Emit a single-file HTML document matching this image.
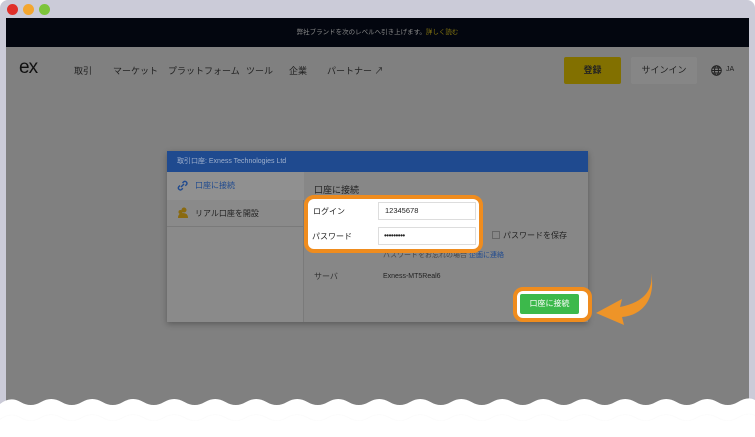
<!DOCTYPE html>
<html><head><meta charset="utf-8"><style>
*{margin:0;padding:0;box-sizing:border-box}
body{width:755px;height:437px;background:#fff;position:relative;overflow:hidden;font-family:"Liberation Sans","Noto Sans CJK JP",sans-serif}
.frame{position:absolute;left:0;top:0;width:755px;height:420px;background:#cbcbd8;border-radius:8px 8px 0 0}
.dot{position:absolute;top:4px;width:11px;height:11px;border-radius:50%}
.page{position:absolute;left:6px;top:18px;width:743px;height:400px;background:#808080}
.top{position:absolute;left:0;top:0;width:743px;height:29px;background:#03060f;color:#8a8a8a;font-size:6.5px;text-align:center;line-height:29px}
.nav{position:absolute;top:46px;font-size:9px;color:#222;white-space:nowrap}
.abs{position:absolute}
</style></head><body>
<div class="frame">
<div class="dot" style="left:7px;background:#e0302a"></div>
<div class="dot" style="left:23px;background:#f3a630"></div>
<div class="dot" style="left:39px;background:#7cc43a"></div>
<div class="page">
 <div class="top">弊社ブランドを次のレベルへ引き上げます。<span style="color:#8a7a10">詳しく読む</span></div>
 <div class="abs" style="left:13px;top:40px;font-size:19px;color:#111;letter-spacing:-1px;line-height:20px">ex</div>
 <div class="nav" style="left:68px">取引</div>
 <div class="nav" style="left:107px">マーケット</div>
 <div class="nav" style="left:162px">プラットフォーム</div>
 <div class="nav" style="left:240px">ツール</div>
 <div class="nav" style="left:283px">企業</div>
 <div class="nav" style="left:321px">パートナー ↗</div>
 <div class="abs" style="left:558px;top:39px;width:57px;height:27px;background:#827000;border-radius:2px;font-size:9px;line-height:27px;text-align:center;color:#222;font-weight:bold">登録</div>
 <div class="abs" style="left:625px;top:39px;width:66px;height:27px;background:#868686;border-radius:2px;font-size:9px;line-height:27px;text-align:center;color:#222">サインイン</div>
 <svg class="abs" style="left:705px;top:47px" width="11" height="11" viewBox="0 0 11 11" fill="none" stroke="#222" stroke-width="1"><circle cx="5.5" cy="5.5" r="4.8"/><ellipse cx="5.5" cy="5.5" rx="2" ry="4.8"/><path d="M.7 5.5H10.3M1.5 3H9.5M1.5 8H9.5"/></svg>
 <div class="abs" style="left:720px;top:48px;font-size:7px;color:#222">JA</div>

 <div class="abs" style="left:161px;top:133px;width:421px;height:171px;background:#878787;box-shadow:0 2px 6px rgba(0,0,0,.3)">
  <div class="abs" style="left:0;top:0;width:421px;height:21px;background:#1f4a8f;color:#9fb0cc;font-size:7px;line-height:21px;padding-left:10px">取引口座: Exness Technologies Ltd</div>
  <div class="abs" style="left:0;top:21px;width:137px;height:150px;background:#8a8a8a;border-right:1px solid #7a7a7a"></div>
  <div class="abs" style="left:0;top:21px;width:137px;height:28px;background:#909090;color:#1f4a8f;font-size:8px;line-height:28px;padding-left:28px">口座に接続</div>
  <svg class="abs" style="left:10px;top:29px" width="11" height="11" viewBox="0 0 11 11" fill="none" stroke="#1f4a8f" stroke-width="1.4"><path d="M4 7 L7 4 M3 5.5 L1.8 6.7 a2 2 0 0 0 2.8 2.8 L5.8 8.3 M5.5 3 L6.7 1.8 a2 2 0 0 1 2.8 2.8 L8.3 5.8"/></svg>
  <div class="abs" style="left:0;top:49px;width:137px;height:27px;border-bottom:1px solid #7a7a7a;color:#222;font-size:8px;line-height:27px;padding-left:28px">リアル口座を開設</div>
  <svg class="abs" style="left:10px;top:56px" width="12" height="11" viewBox="0 0 12 11" fill="#8a6a10"><circle cx="7" cy="3" r="2.5"/><path d="M1 11 Q1 6 6 6 Q11 6 11 11Z"/><circle cx="3.5" cy="5" r="2"/></svg>
  <div class="abs" style="left:147px;top:32px;font-size:9px;color:#222">口座に接続</div>
  <div class="abs" style="left:325px;top:80px;width:8px;height:8px;border:1px solid #666"></div>
  <div class="abs" style="left:336px;top:79px;font-size:8px;color:#222">パスワードを保存</div>
  <div class="abs" style="left:216px;top:99px;font-size:7px;color:#444">パスワードをお忘れの場合 <span style="color:#1f4a8f">企画に連絡</span></div>
  <div class="abs" style="left:147px;top:120px;font-size:8px;color:#333">サーバ</div>
  <div class="abs" style="left:216px;top:122px;font-size:7px;color:#222">Exness-MT5Real6</div>
 </div>

 <div class="abs" style="left:298px;top:177px;width:179px;height:58px;background:#fff;border:4px solid #ef8c1e;border-radius:10px"></div>
 <div class="abs" style="left:307px;top:188px;font-size:8px;color:#222">ログイン</div>
 <div class="abs" style="left:306px;top:213px;font-size:8px;color:#222">パスワード</div>
 <div class="abs" style="left:372px;top:184px;width:98px;height:18px;border:1px solid #ddd;font-size:7.5px;line-height:16px;padding-left:6px;color:#222">12345678</div>
 <div class="abs" style="left:372px;top:209px;width:98px;height:18px;border:1px solid #ddd;font-size:8px;line-height:15px;padding-left:5px;color:#222;letter-spacing:-.5px">•••••••••</div>

 <div class="abs" style="left:507px;top:269px;width:79px;height:35px;background:#fff;border:4px solid #ef8c1e;border-radius:10px"></div>
 <div class="abs" style="left:514px;top:276px;width:59px;height:20px;background:#3cb94b;border-radius:2px;color:#fff;font-size:8px;line-height:20px;text-align:center">口座に接続</div>
 <svg class="abs" style="left:588px;top:253px" width="62" height="56" viewBox="0 0 62 56"><path d="M57 2 C60 20 48 32 26 36 L28 28 L2 42 L30 54 L28 46 C50 44 62 26 57 2Z" fill="#ee9428"/></svg>
</div>
</div>
<svg class="abs" style="position:absolute;left:0;top:396px" width="755" height="41" viewBox="0 0 755 41">
<defs><filter id="s"><feDropShadow dx="0" dy="1.5" stdDeviation="1" flood-color="#000" flood-opacity=".4"/></filter></defs>
<path d="M0 8 Q10.25 0 20.5 6 Q30.75 12 41 6 Q51.25 0 61.5 6 Q71.75 12 82 6 Q92.25 0 102.5 6 Q112.75 12 123 6 Q133.25 0 143.5 6 Q153.75 12 164 6 Q174.25 0 184.5 6 Q194.75 12 205 6 Q215.25 0 225.5 6 Q235.75 12 246 6 Q256.25 0 266.5 6 Q276.75 12 287 6 Q297.25 0 307.5 6 Q317.75 12 328 6 Q338.25 0 348.5 6 Q358.75 12 369 6 Q379.25 0 389.5 6 Q399.75 12 410 6 Q420.25 0 430.5 6 Q440.75 12 451 6 Q461.25 0 471.5 6 Q481.75 12 492 6 Q502.25 0 512.5 6 Q522.75 12 533 6 Q543.25 0 553.5 6 Q563.75 12 574 6 Q584.25 0 594.5 6 Q604.75 12 615 6 Q625.25 0 635.5 6 Q645.75 12 656 6 Q666.25 0 676.5 6 Q686.75 12 697 6 Q707.25 0 717.5 6 Q727.75 12 738 6 Q748 0 755 4 L755 41 L0 41Z" fill="#fff" filter="url(#s)"/>
<path d="M0 24 Q10.25 16 20.5 22 Q30.75 28 41 22 Q51.25 16 61.5 22 Q71.75 28 82 22 Q92.25 16 102.5 22 Q112.75 28 123 22 Q133.25 16 143.5 22 Q153.75 28 164 22 Q174.25 16 184.5 22 Q194.75 28 205 22 Q215.25 16 225.5 22 Q235.75 28 246 22 Q256.25 16 266.5 22 Q276.75 28 287 22 Q297.25 16 307.5 22 Q317.75 28 328 22 Q338.25 16 348.5 22 Q358.75 28 369 22 Q379.25 16 389.5 22 Q399.75 28 410 22 Q420.25 16 430.5 22 Q440.75 28 451 22 Q461.25 16 471.5 22 Q481.75 28 492 22 Q502.25 16 512.5 22 Q522.75 28 533 22 Q543.25 16 553.5 22 Q563.75 28 574 22 Q584.25 16 594.5 22 Q604.75 28 615 22 Q625.25 16 635.5 22 Q645.75 28 656 22 Q666.25 16 676.5 22 Q686.75 28 697 22 Q707.25 16 717.5 22 Q727.75 28 738 22 Q748 16 755 20 L755 41 L0 41Z" fill="#fff" filter="url(#s)"/>
</svg>
</body></html>
